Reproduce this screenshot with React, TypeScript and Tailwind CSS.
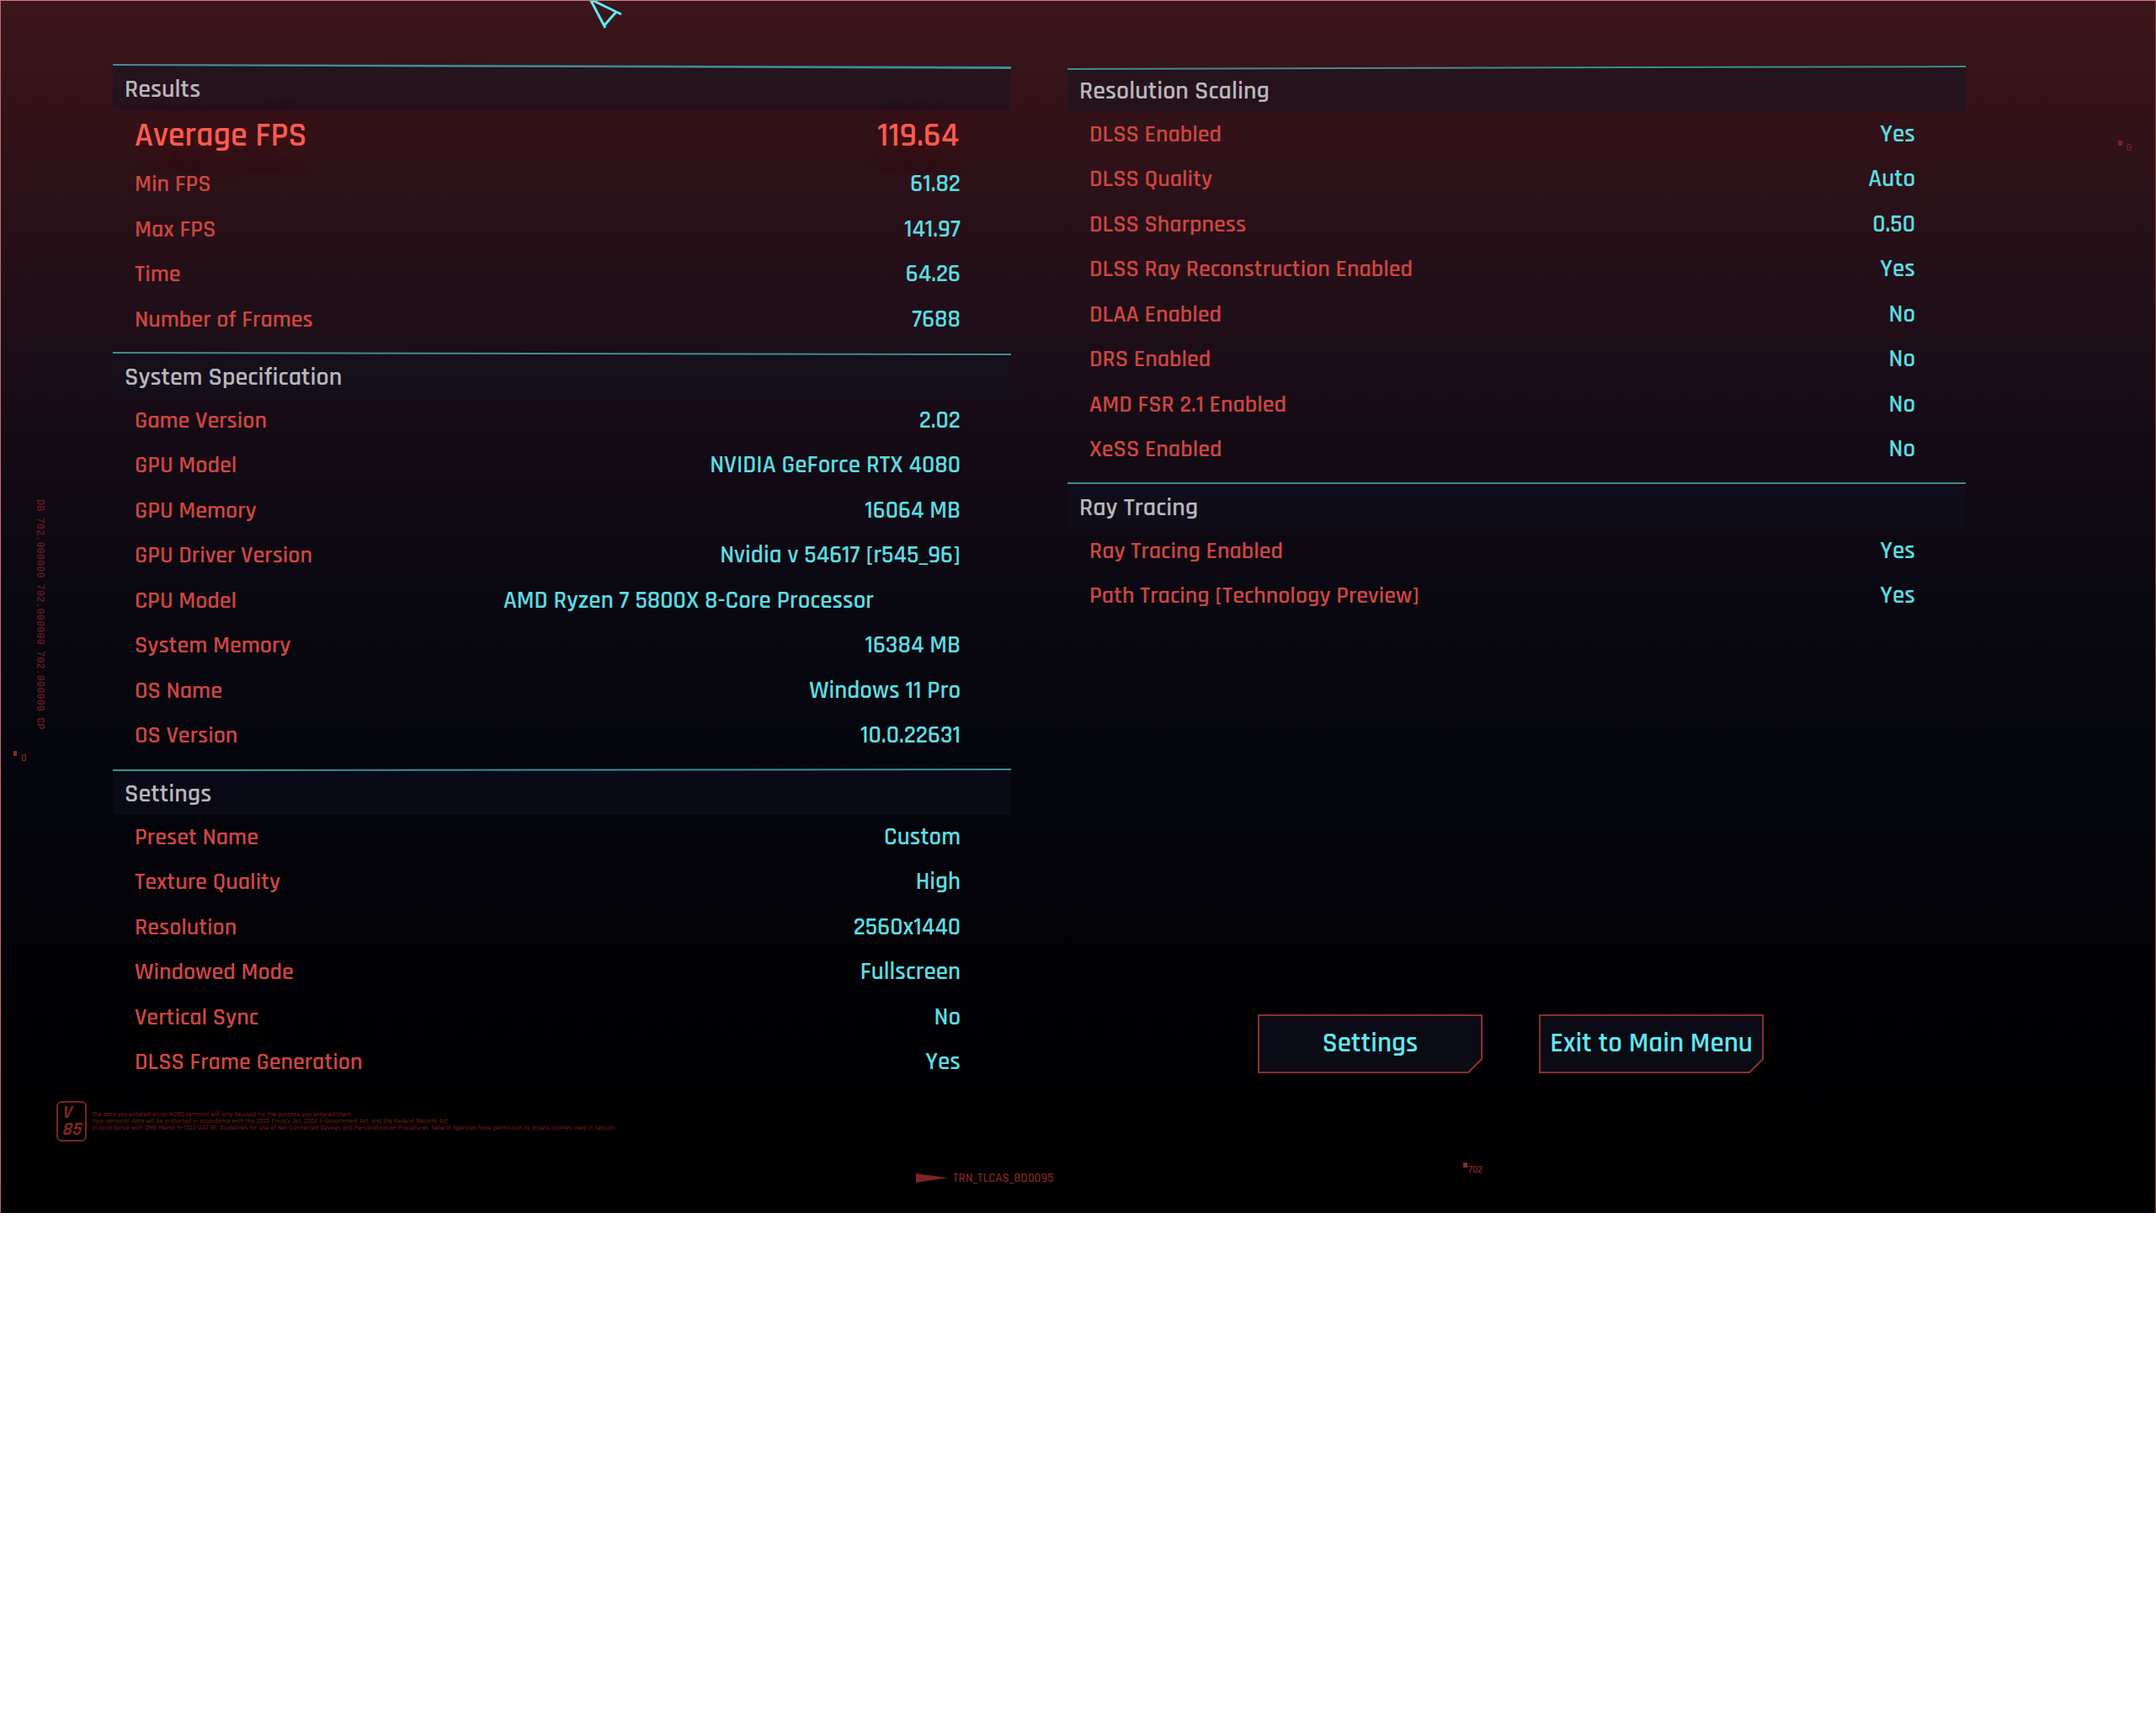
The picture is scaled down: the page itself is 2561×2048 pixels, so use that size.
import React from "react"

type RowData = {
  label: string
  value: string
  highlight?: boolean
  inset?: boolean
}

type SectionData = {
  title: string
  rule: string
  fill: string
  rows: RowData[]
}

// rule and fill follow the slight bend of the screen at each height
const leftSections: SectionData[] = [
  {
    title: "Results",
    rule: "0,0 1067,3 1067,6 0,2",
    fill: "0,2 1067,6 0,6",
    rows: [
      { label: "Average FPS", value: "119.64", highlight: true },
      { label: "Min FPS", value: "61.82" },
      { label: "Max FPS", value: "141.97" },
      { label: "Time", value: "64.26" },
      { label: "Number of Frames", value: "7688" }
    ]
  },
  {
    title: "System Specification",
    rule: "0,0 1067,2 1067,4 0,2",
    fill: "0,2 1067,4 1067,6 0,6",
    rows: [
      { label: "Game Version", value: "2.02" },
      { label: "GPU Model", value: "NVIDIA GeForce RTX 4080" },
      { label: "GPU Memory", value: "16064 MB" },
      { label: "GPU Driver Version", value: "Nvidia v 54617 [r545_96]" },
      {
        label: "CPU Model",
        value: "AMD Ryzen 7 5800X 8-Core Processor",
        inset: true
      },
      { label: "System Memory", value: "16384 MB" },
      { label: "OS Name", value: "Windows 11 Pro" },
      { label: "OS Version", value: "10.0.22631" }
    ]
  },
  {
    title: "Settings",
    rule: "0,1 1067,0 1067,2 0,3",
    fill: "0,3 1067,2 1067,6 0,6",
    rows: [
      { label: "Preset Name", value: "Custom" },
      { label: "Texture Quality", value: "High" },
      { label: "Resolution", value: "2560x1440" },
      { label: "Windowed Mode", value: "Fullscreen" },
      { label: "Vertical Sync", value: "No" },
      { label: "DLSS Frame Generation", value: "Yes" }
    ]
  }
]

const rightSections: SectionData[] = [
  {
    title: "Resolution Scaling",
    rule: "0,3 1067,0 1067,2 0,5",
    fill: "0,5 1067,2 1067,6 0,6",
    rows: [
      { label: "DLSS Enabled", value: "Yes" },
      { label: "DLSS Quality", value: "Auto" },
      { label: "DLSS Sharpness", value: "0.50" },
      { label: "DLSS Ray Reconstruction Enabled", value: "Yes" },
      { label: "DLAA Enabled", value: "No" },
      { label: "DRS Enabled", value: "No" },
      { label: "AMD FSR 2.1 Enabled", value: "No" },
      { label: "XeSS Enabled", value: "No" }
    ]
  },
  {
    title: "Ray Tracing",
    rule: "0,0 1067,0 1067,2 0,2",
    fill: "0,2 1067,2 1067,6 0,6",
    rows: [
      { label: "Ray Tracing Enabled", value: "Yes" },
      { label: "Path Tracing [Technology Preview]", value: "Yes" }
    ]
  }
]

const Section = ({ title, rule, fill, rows }: SectionData) => {
  return (
    <section>
      <svg
        className="block w-full h-[6px]"
        viewBox="0 0 1067 6"
        preserveAspectRatio="none"
        aria-hidden="true"
      >
        <polygon points={fill} fill="#121223" fillOpacity="0.45" />
        <polygon points={rule} fill="#3f8d92" />
      </svg>
      <h2 className={styles.heading}>{title}</h2>
      <table className="w-full">
        <tbody>
          {rows.map((row) => (
            <tr
              key={row.label}
              className={row.highlight ? styles.rowBig : styles.row}
            >
              <th
                scope="row"
                className={row.highlight ? styles.labelBig : styles.label}
              >
                {row.label}
              </th>
              <td
                className={
                  row.highlight
                    ? styles.valueBig
                    : row.inset
                      ? styles.valueInset
                      : styles.value
                }
              >
                {row.value}
              </td>
            </tr>
          ))}
        </tbody>
      </table>
    </section>
  )
}

const MenuButton = ({ children }: { children: React.ReactNode }) => {
  return (
    <button
      type="button"
      className="relative w-[267px] h-[70px] text-[33px] font-semibold text-[#5eeaf0]"
    >
      <svg
        className="absolute inset-0 size-full"
        viewBox="0 0 267 70"
        preserveAspectRatio="none"
        aria-hidden="true"
      >
        <path
          d="M1 1H266V53L250 69H1Z"
          fill="#0b0b15"
          stroke="#8c2f30"
          strokeWidth="2"
        />
      </svg>
      <span className="relative">{children}</span>
    </button>
  )
}

const App = () => {
  return (
    <main className={styles.screen}>
      <div className="grid grid-cols-2 gap-[67px] pl-[133px] pr-[225px]">
        <div className="flex flex-col gap-3">
          {leftSections.map((section) => (
            <Section key={section.title} {...section} />
          ))}
        </div>
        <div className="flex flex-col gap-3 pt-[2px]">
          {rightSections.map((section) => (
            <Section key={section.title} {...section} />
          ))}
          <div className="mt-auto mb-[14px] pl-[226px] flex gap-[67px]">
            <MenuButton>Settings</MenuButton>
            <MenuButton>Exit to Main Menu</MenuButton>
          </div>
        </div>
      </div>

      <footer className="mt-[19px] pl-[66px] flex items-center gap-[6px] text-[#7c2323]">
        <div className="w-9 h-12 pl-1 border-2 rounded-md text-[22px] leading-[20px] font-bold italic flex flex-col justify-center">
          <span>V</span>
          <span>85</span>
        </div>
        <p className="text-[8px] leading-[8px] font-medium text-[#7c1c20]">
          The data you entered on an NCRD terminal will only be used for the
          purpose you entered them.
          <br />
          Your personal data will be protected in accordance with the 2025
          Privacy Act, 2002 E-Government Act, and the Federal Records Act.
          <br />
          In accordance with OMB Memo M-1022-042 RE: Guidelines for Use of
          Net-Connected Devices and Personalization Procedures, federal agencies
          have permission to access cookies used in session.
        </p>
      </footer>

      {/* cursor */}
      <svg
        className="absolute left-[689px] top-[-2px] w-[60px] h-[40px]"
        viewBox="0 0 60 40"
        fill="none"
        stroke="#5ceaf2"
        strokeWidth="3"
        aria-hidden="true"
      >
        <path d="M11 0L29 34M11 0L48 18M28 31L42 15" />
      </svg>

      {/* hud decorations */}
      <p className="absolute left-[39px] top-[592px] [writing-mode:vertical-rl] font-['Liberation_Mono',monospace] text-[12px] leading-[14px] font-bold text-[#5a1b21]">
        DB 702.000000 702.000000 702.000000 CP
      </p>
      <div className="absolute left-[15px] top-[891px] flex gap-[5px] text-[#8a2828]">
        <span className="w-[4px] h-[6px] bg-current" />
        <span className={styles.tag}>0</span>
      </div>
      <div className="absolute right-[28px] top-[166px] flex gap-[5px] text-[#74262c]">
        <span className="w-[5px] h-[6px] bg-current" />
        <span className={styles.tag}>0</span>
      </div>
      <div className="absolute left-[1737px] bottom-[45px] flex gap-px text-[#8a2828]">
        <span className="w-[5px] h-[6px] bg-current" />
        <span className={styles.tag}>702</span>
      </div>
      <div className="absolute left-[1087px] bottom-[33px] flex items-center gap-[6px] text-[15px] leading-[15px] font-semibold text-[#7c2323]">
        <svg className="w-[38px] h-[11px]" viewBox="0 0 38 11">
          <polygon points="0,0 38,5 0,11" fill="#7c2323" />
        </svg>
        <span>TRN_TLCAS_8D0095</span>
      </div>
    </main>
  )
}

const styles = {
  screen:
    "relative overflow-hidden pt-[75px] pb-[84px] border border-t-[#e07a7a] border-l-[#c96a6a] border-r-[#8f3840] border-b-[#200608] bg-[linear-gradient(#3b161b_0px,#331318_130px,#281018_270px,#1c0e18_410px,#120a14_560px,#090811_720px,#05050d_900px,#020207_1120px,#000000_1400px)] font-['Rajdhani','Roboto_Condensed',sans-serif]",
  heading:
    "h-[49px] pl-[14px] text-[30px] leading-[48px] font-semibold text-[#b9b7ba] bg-[#121223]/45",
  row: "odd:h-[53px] even:h-[54px]",
  rowBig: "h-[61px]",
  label:
    "pl-[26px] text-left text-[28px] leading-[40px] font-semibold text-[#cf4641]",
  labelBig:
    "pl-[26px] text-left text-[40px] leading-[40px] font-semibold text-[#ff5a50] [text-shadow:0_4px_30px_#5a1414]",
  value:
    "pr-[60px] text-right text-[29px] leading-[40px] font-semibold text-[#5cdde2]",
  valueInset:
    "pr-[163px] text-right text-[29px] leading-[40px] font-semibold text-[#5cdde2]",
  valueBig:
    "pr-[62px] text-right text-[40px] leading-[40px] font-semibold tabular-nums text-[#ff5a50] [text-shadow:0_4px_30px_#5a1414]",
  tag: "pt-[4px] text-[12px] leading-[10px] font-semibold"
}

export default App
